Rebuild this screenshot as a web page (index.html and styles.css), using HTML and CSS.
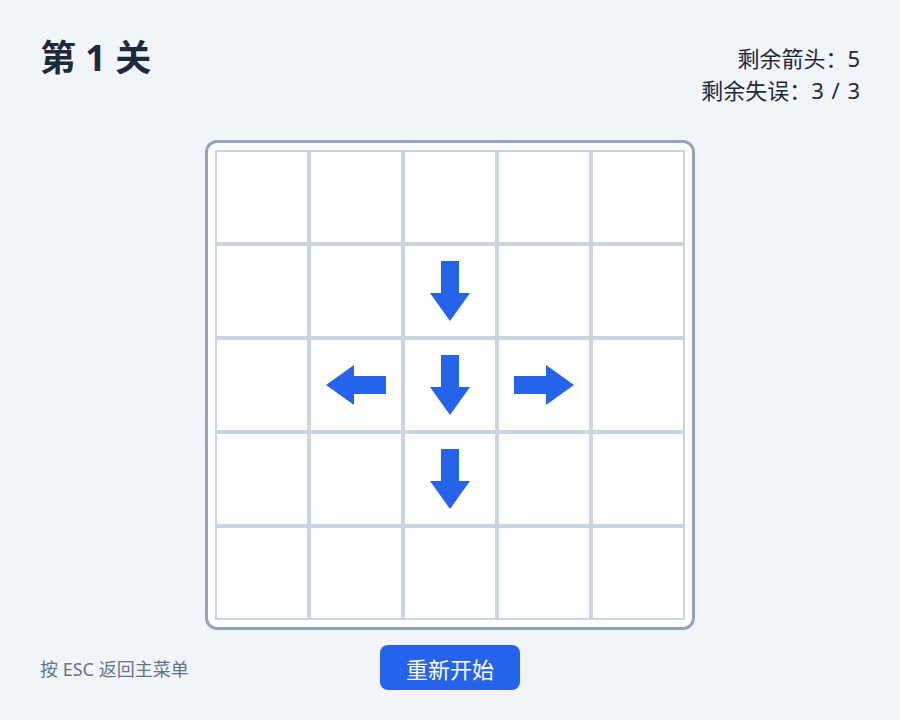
FILE: index.html
```html
<!DOCTYPE html>
<html lang="zh-CN">
<head>
<meta charset="utf-8">
<title>第 1 关</title>
<link rel="stylesheet" href="styles.css">
</head>
<body>
<div class="page">
  <header class="header">
    <h1 class="title">第 1 关</h1>
    <div class="stats">
      <div class="stat">剩余箭头：5</div>
      <div class="stat">剩余失误：3 / 3</div>
    </div>
  </header>
  <main class="board">
    <div class="grid">
      <div class="cell"></div><div class="cell"></div><div class="cell"></div><div class="cell"></div><div class="cell"></div>
      <div class="cell"></div><div class="cell"></div>
      <div class="cell"><svg class="arrow down" viewBox="0 0 60 60"><polygon points="21,0 39,0 39,32 50,32 30,60 10,32 21,32"/></svg></div>
      <div class="cell"></div><div class="cell"></div>
      <div class="cell"></div>
      <div class="cell"><svg class="arrow left" viewBox="0 0 60 60"><polygon points="21,0 39,0 39,32 50,32 30,60 10,32 21,32"/></svg></div>
      <div class="cell"><svg class="arrow down" viewBox="0 0 60 60"><polygon points="21,0 39,0 39,32 50,32 30,60 10,32 21,32"/></svg></div>
      <div class="cell"><svg class="arrow right" viewBox="0 0 60 60"><polygon points="21,0 39,0 39,32 50,32 30,60 10,32 21,32"/></svg></div>
      <div class="cell"></div>
      <div class="cell"></div><div class="cell"></div>
      <div class="cell"><svg class="arrow down" viewBox="0 0 60 60"><polygon points="21,0 39,0 39,32 50,32 30,60 10,32 21,32"/></svg></div>
      <div class="cell"></div><div class="cell"></div>
      <div class="cell"></div><div class="cell"></div><div class="cell"></div><div class="cell"></div><div class="cell"></div>
    </div>
  </main>
  <footer class="footer">
    <div class="hint">按 ESC 返回主菜单</div>
    <button class="restart" type="button">重新开始</button>
    <div></div>
  </footer>
</div>
</body>
</html>
```
FILE: styles.css
```css
* { box-sizing: border-box; }
html, body {
  margin: 0;
  padding: 0;
  background: #f1f5f9;
}
body {
  font-family: "Noto Sans", "Noto Sans CJK SC", sans-serif;
  color: #1e293b;
  width: 900px;
  height: 720px;
  overflow: hidden;
}
.page {
  padding: 42px 40px 0 40px;
}
.header {
  display: flex;
  justify-content: space-between;
  align-items: flex-start;
}
.title {
  margin: 0;
  font-size: 36px;
  line-height: 32px;
  font-weight: 700;
  color: #1e293b;
}
.stats {
  text-align: right;
  font-size: 22px;
  line-height: 32px;
  word-spacing: 2px;
  color: #1e293b;
}
.board {
  width: fit-content;
  margin: 34px auto 0 auto;
  background: #ffffff;
  border: 3px solid #94a3b8;
  border-radius: 12px;
  padding: 7px;
}
.grid {
  display: grid;
  grid-template-columns: repeat(5, 94px);
  grid-template-rows: repeat(5, 94px);
}
.cell {
  border: 2px solid #cbd5e1;
  display: flex;
  align-items: center;
  justify-content: center;
}
.arrow {
  width: 60px;
  height: 60px;
  fill: #2563eb;
}
.arrow.left { transform: rotate(90deg); }
.arrow.right { transform: rotate(-90deg); }
.footer {
  display: grid;
  grid-template-columns: 1fr auto 1fr;
  align-items: center;
  margin-top: 15px;
}
.hint {
  font-size: 18px;
  color: #64748b;
}
.restart {
  width: 140px;
  height: 45px;
  border: none;
  border-radius: 8px;
  background: #2563eb;
  color: #ffffff;
  font-family: "Noto Sans", "Noto Sans CJK SC", sans-serif;
  font-size: 22px;
  padding: 0;
}
```
